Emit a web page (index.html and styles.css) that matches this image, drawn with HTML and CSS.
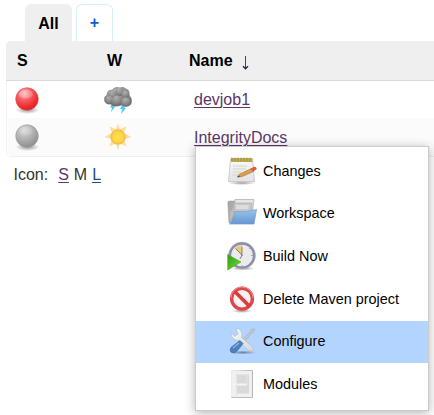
FILE: index.html
```
<!DOCTYPE html>
<html lang="en">
<head>
<meta charset="utf-8">
<title>Jobs</title>
<link rel="stylesheet" href="styles.css">
</head>
<body>
<svg class="defs" aria-hidden="true">
  <defs>
    <radialGradient id="red" cx=".38" cy=".25" r=".8"><stop offset="0" stop-color="#ffb9b9"/><stop offset=".4" stop-color="#f65b60"/><stop offset=".75" stop-color="#ef2c31"/><stop offset="1" stop-color="#d52025"/></radialGradient>
    <radialGradient id="grey" cx=".38" cy=".25" r=".8"><stop offset="0" stop-color="#dcdcdc"/><stop offset=".45" stop-color="#b4b4b4"/><stop offset="1" stop-color="#8b8b8b"/></radialGradient>
    <radialGradient id="shade"><stop offset="0" stop-color="#000" stop-opacity=".4"/><stop offset="1" stop-color="#000" stop-opacity="0"/></radialGradient>
    <radialGradient id="cloud" cx=".4" cy=".2" r=".9"><stop offset="0" stop-color="#b0b0b0"/><stop offset=".55" stop-color="#8b8b8b"/><stop offset="1" stop-color="#636363"/></radialGradient>
    <radialGradient id="sun"><stop offset="0" stop-color="#ffe04c"/><stop offset=".7" stop-color="#fdd445"/><stop offset="1" stop-color="#f5b942"/></radialGradient>
    <linearGradient id="paper" x2="0" y2="1"><stop offset="0" stop-color="#fafafa"/><stop offset="1" stop-color="#e2e2e2"/></linearGradient>
    <linearGradient id="sheet" x2="1"><stop offset="0" stop-color="#ededed"/><stop offset="1" stop-color="#b5b5b5"/></linearGradient>
    <linearGradient id="blue" x2="0" y2="1"><stop offset="0" stop-color="#9cc3ea"/><stop offset="1" stop-color="#6496d0"/></linearGradient>
    <linearGradient id="metal" x2="1" y2="1"><stop offset="0" stop-color="#fafafa"/><stop offset="1" stop-color="#d3d6d8"/></linearGradient>
    <linearGradient id="green" x2="1" y2="1"><stop offset="0" stop-color="#2f9d12"/><stop offset="1" stop-color="#75dc3b"/></linearGradient>
  </defs>
</svg>
<nav class="tabs">
  <a class="tab active">All</a>
  <a class="tab add">+</a>
</nav>
<main class="jobs">
  <div class="row head">
    <span>S</span><span>W</span><span>Name <svg class="arrow" viewBox="0 0 7 14"><path d="M3.5 0V12" fill="none" stroke="#5c3566"/><path d="M1 10.3 3.5 12.7 6 10.3" fill="none" stroke="#29204a" stroke-width="1.4"/></svg></span>
  </div>
  <div class="row">
    <span class="status"><svg viewBox="0 0 28 28"><ellipse cx="14.5" cy="24" rx="12" ry="4" fill="url(#shade)"/><circle cx="14" cy="13" r="11.3" fill="url(#red)" stroke="#dc5054" stroke-width=".6"/><ellipse cx="13" cy="8" rx="7" ry="4.3" fill="#fff" opacity=".22"/></svg></span>
    <span class="weather"><svg viewBox="0 0 28 28"><path d="m8 18-2 3.5h2L7 26l4-5H9l3-3zM18 19l-2 4h2l-1 5 5-6h-2l3-3z" fill="#4dcaf8"/><path d="M1 16Q-1 11 3 9q0-5 5-5 3-4 8-2 3-2 6 1 4 1 3 6 4 4 2 9-3 4-9 1Q8 22 7 18q-4 1-6-2z" fill="url(#cloud)" stroke="#777" stroke-width=".5"/><g fill="url(#cloud)"><circle cx="8.5" cy="9" r="4"/><circle cx="15.5" cy="6" r="4.2"/><circle cx="21.5" cy="8.5" r="3.8"/><circle cx="5.5" cy="14" r="4"/><circle cx="13" cy="14.5" r="5"/><circle cx="22" cy="16" r="4.5"/></g></svg></span>
    <span class="job"><a>devjob1</a></span>
  </div>
  <div class="row alt">
    <span class="status"><svg viewBox="0 0 28 28"><ellipse cx="14.5" cy="24" rx="12" ry="4" fill="url(#shade)"/><circle cx="14" cy="13" r="11.3" fill="url(#grey)" stroke="#999" stroke-width=".6"/><ellipse cx="13" cy="8" rx="7" ry="4.3" fill="#fff" opacity=".12"/></svg></span>
    <span class="weather"><svg viewBox="0 0 28 28"><path d="m14 .5 2.1 5.7 6.6-2.9-2.8 6.6 7.6 4.1-7.6 2.2 2.8 7-6.8-2.8L14 27.5l-2.1-7.1-6.6 2.8 2.7-7L.5 14 8 9.9 5.3 3.3l6.6 2.9z" fill="#f9df9b"/><circle cx="14" cy="14" r="7.3" fill="url(#sun)" stroke="#efbd58" stroke-width=".8"/></svg></span>
    <span class="job"><a>IntegrityDocs</a>
      <ul class="menu">
        <li><svg viewBox="0 0 30 30"><ellipse cx="15" cy="27" rx="14" ry="2" fill="url(#shade)"/><path d="M3.5 3h22l2 22.5H1.5z" fill="url(#paper)" stroke="#bbb" stroke-width=".7"/><path d="M4 2h21.5v4H4z" fill="#bdae52"/><path d="M5 1.5v4M8 1.5v4M11 1.5v4M14 1.5v4M17 1.5v4M20 1.5v4M23 1.5v4" stroke="#8b7e31" stroke-width=".6"/><path d="M6 10h14M6 13h13M5.5 16h9M5 19h6" stroke="#d4d4d4"/><path d="m12 18.5 12.5-6 2 3L15 20.5l-4.5.7z" fill="#dda04d" stroke="#a97938" stroke-width=".7"/><path d="m23.5 12.8 3.5-2q3 0 2.5 2.5L26 15.5z" fill="#e8533c"/><path d="m10 21.2 2-1.7 1 1.2z" fill="#444"/></svg>Changes</li>
        <li><svg viewBox="0 0 30 30"><path d="M.8 4 2 3h6l2 3v19H2z" fill="#aaa" stroke="#999" stroke-width=".5"/><path d="M8 1.5h19L25 18H7z" fill="#e5e5e5" stroke="#aaa" stroke-width=".7"/><path d="M7 5h18v14H4z" fill="#c8c8c8" stroke="#aaa" stroke-width=".6"/><path d="M9 7h13l-1 4H9z" fill="#ddd"/><path d="M3 14 8 7v7L3 24z" fill="#bbb"/><path d="M8 13.5q10 1.5 21.5-2L27 26H2.5q3-1 3.5-6z" fill="url(#blue)" stroke="#6b9cd4" stroke-width=".7"/></svg>Workspace</li>
        <li><svg viewBox="0 0 30 30"><ellipse cx="16" cy="27.5" rx="12" ry="2" fill="url(#shade)"/><circle cx="15" cy="14.5" r="12.2" fill="#ecebea" stroke="#8c8ca9" stroke-width="2.7"/><circle cx="15" cy="14.5" r="13.5" fill="none" stroke="#bbbbca" stroke-width=".6"/><path d="M15 15 8 7q3-3 7-2.5z" fill="#e8ca73"/><path d="m8.5 7.5 6.5 6.5-2 4M15 6v9" fill="none" stroke="#77747a" stroke-width=".9"/><path d="M15 3v2M26 14.5h-2M15 26v-2M23 7l-1 1M23 23l-1-1" stroke="#aaa"/><path d="M.7 13.5 14 21 .7 29z" fill="url(#green)" stroke="#4bad29" stroke-width=".6"/></svg>Build Now</li>
        <li><svg viewBox="0 0 30 30"><ellipse cx="15" cy="27" rx="10" ry="2" fill="url(#shade)"/><circle cx="15" cy="14.7" r="10.4" fill="#f5f1f1" stroke="#df454a" stroke-width="3.4"/><path d="m7.8 7.5 14.4 14.4" stroke="#dc3b40" stroke-width="3.6"/><path d="M4 14a11 11 0 0 1 22 0" fill="none" stroke="#f08b8b"/></svg>Delete Maven project</li>
        <li class="selected"><svg viewBox="0 0 30 30"><ellipse cx="16" cy="26.5" rx="13" ry="2" fill="url(#shade)"/><path d="m15 14 8-8 1-2 3-1.5.8.8-1.5 3-2 1-7.5 9z" fill="#c2c9cf" stroke="#a5b0bc" stroke-width=".8"/><path d="m4 6 3.5 4.5L11 8l-2-5.5q6 0 6 6.5l-.5 2.5L26 21q2 3-1 4-2 1-4-1l-9.5-9.5Q4 14.5 4 6z" fill="url(#metal)" stroke="#b7c0c8" stroke-width=".8"/><path d="m13 14.5 3 3-5.5 7Q8 28 4.5 26.5q-2.5-2-.5-5z" fill="#4d80bd" stroke="#426fa9" stroke-width=".8"/><path d="m6 22 6-5" stroke="#8bb1df" stroke-width="1.4"/></svg>Configure</li>
        <li><svg viewBox="0 0 30 30"><path d="M4.5 1.5h21v27h-21z" fill="#f0f0f0" stroke="url(#sheet)"/><path d="M9 5.5h13v19H9z" fill="#d9d9d9"/><path d="M6 15.5h14" stroke="#f5f5f5" stroke-width="2"/><path d="M20 6v10M9.5 4v23" stroke="#e5e5e5"/><path d="M4.5 28.5h21" stroke="#bbb"/></svg>Modules</li>
      </ul>
    </span>
  </div>
</main>
<div class="sizes">Icon:<a class="visited">S</a><span>M</span><a>L</a></div>
</body>
</html>
```

FILE: styles.css
```
* { box-sizing: border-box; }
body { margin: 0; height: 415px; overflow: hidden; background: #fff; color: #333; font: 16px/18px "Liberation Sans", Arial, sans-serif; }
.defs { position: absolute; width: 0; height: 0; }
.tabs { display: flex; gap: 4px; padding: 4px 0 0 25px; height: 41px; }
.tab { width: 47px; height: 37px; padding-top: 11px; text-align: center; font-weight: bold; border-radius: 6px 6px 0 0; color: #000; }
.active { background: #efefef; }
.add { width: 37px; padding-top: 9px; border: 1px solid #d5edff; border-bottom: 0; color: #0b5fd0; }
.jobs { margin-left: 6px; height: 116px; border-left: 1px solid #f3f3f3; border-bottom: 1px solid #efefef; border-radius: 5px 0 0 5px; }
.row { display: grid; grid-template-columns: 90px 82px 1fr; height: 37px; align-items: center; }
.head { height: 40px; margin-left: -1px; padding-left: 11px; background: #efefef; border-bottom: 1px solid #dadada; border-radius: 5px 0 0; color: #000; font-weight: bold; }
.arrow { width: 7px; height: 14px; margin-left: 5px; vertical-align: -4px; }
.alt { height: 38px; background: #fbfbfb; }
.status, .weather { display: flex; padding-left: 6px; }
.weather { padding-left: 7px; }
.status svg, .weather svg { width: 28px; height: 28px; }
.job { position: relative; padding-left: 15px; }
.alt .job { padding-top: 2px; }
.job a, .sizes a { text-decoration: underline; text-underline-offset: 2px; text-decoration-thickness: 1px; }
.job a { color: #5c3566; }
.menu { position: absolute; left: 16px; top: 19px; width: 234px; height: 265px; margin: 0; padding: 3px 0 0; list-style: none; background: #fff; border: 1px solid #ccc; box-shadow: 0 2px 10px rgba(0,0,0,.3); color: #000; font-size: 14.4px; }
.menu li { display: flex; align-items: center; gap: 6px; height: 42.67px; padding: 0 0 1px 31px; }
.menu svg { width: 30px; height: 30px; }
.menu .selected { background: #b3d4ff; }
.sizes { display: flex; gap: 5px; padding: 9px 0 0 13.5px; }
.sizes a { color: #204a87; }
.sizes .visited { color: #5c3566; margin-left: 5px; }
```
